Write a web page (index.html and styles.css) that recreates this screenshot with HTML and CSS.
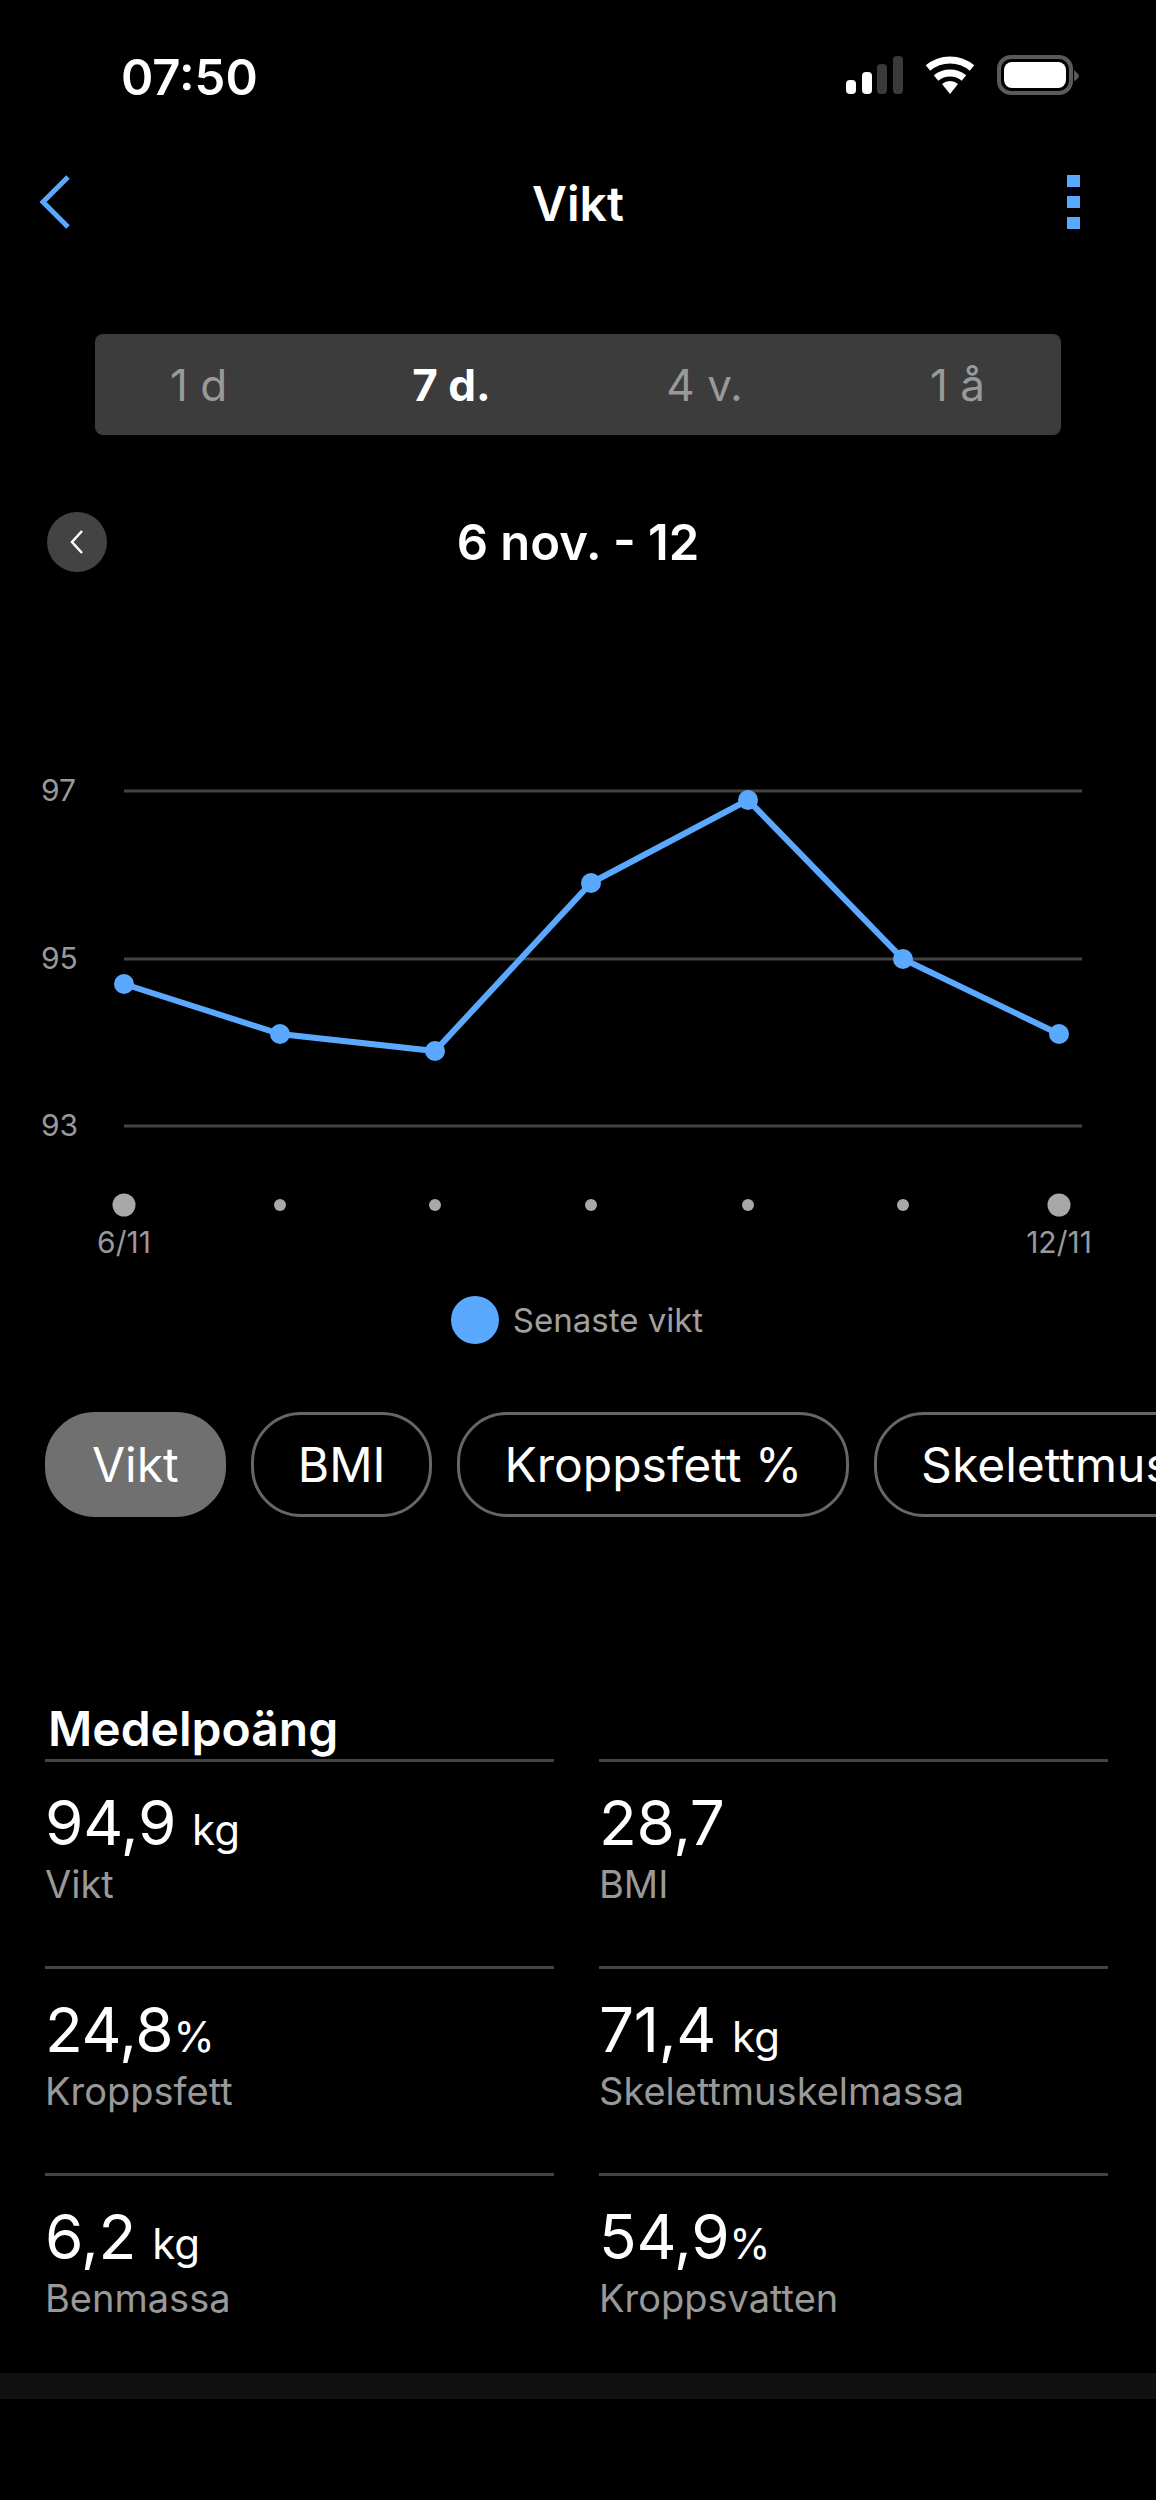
FILE: index.html
```html
<!DOCTYPE html>
<html lang="sv">
<head>
  <meta charset="UTF-8">
  <title>Vikt</title>
  <meta name="viewport" content="width=device-width, initial-scale=1.0">
  <link rel="stylesheet" href="styles.css">
</head>
<body>

  <div class="status-bar">
    <div class="time">07:50</div>
    <svg class="status-icons" width="240" height="44" viewBox="0 0 240 44">
      <rect x="0" y="25" width="10" height="14" rx="4" fill="#fff"/>
      <rect x="16" y="17" width="10" height="22" rx="4" fill="#fff"/>
      <rect x="31" y="9" width="10" height="30" rx="4" fill="#3a3a3a"/>
      <rect x="47" y="1" width="10" height="38" rx="4" fill="#3a3a3a"/>
      <path d="M82 13 A 34 34 0 0 1 126 13" fill="none" stroke="#fff" stroke-width="7"/>
      <path d="M90 23 A 22 22 0 0 1 118 23" fill="none" stroke="#fff" stroke-width="7"/>
      <path d="M96 29 A 12 12 0 0 1 112 29 L104 39 Z" fill="#fff"/>
      <rect x="153" y="2" width="72" height="36" rx="12" fill="none" stroke="#5a5a5a" stroke-width="4"/>
      <rect x="158" y="7" width="62" height="26" rx="8" fill="#fff"/>
      <path d="M228 15 Q233 20 233 20 Q233 24 228 26 Z" fill="#5a5a5a"/>
    </svg>
  </div>

  <div class="nav">
    <svg class="back" width="34" height="56" viewBox="0 0 34 56">
      <path d="M30 3 L5 28 L30 53" fill="none" stroke="#5aa9ff" stroke-width="5"/>
    </svg>
    <div class="nav-title">Vikt</div>
    <div class="more"><span></span><span></span><span></span></div>
  </div>

  <div class="segments">
    <div class="segment">1 d</div>
    <div class="segment active">7 d.</div>
    <div class="segment">4 v.</div>
    <div class="segment">1 å</div>
  </div>

  <div class="date-row">
    <div class="date-prev">
      <svg width="16" height="26" viewBox="0 0 16 26">
        <path d="M13 2 L3 13 L13 24" fill="none" stroke="#fff" stroke-width="2.5"/>
      </svg>
    </div>
    <div class="date-label">6 nov. - 12</div>
  </div>

  <svg class="chart" width="1156" height="600" viewBox="0 760 1156 600">
    <g class="grid">
      <line x1="124" y1="791" x2="1082" y2="791"/>
      <line x1="124" y1="959" x2="1082" y2="959"/>
      <line x1="124" y1="1126" x2="1082" y2="1126"/>
    </g>
    <g class="axis-label">
      <text x="41" y="801">97</text>
      <text x="41" y="969">95</text>
      <text x="41" y="1136">93</text>
      <text x="124" y="1253" text-anchor="middle">6/11</text>
      <text x="1059" y="1253" text-anchor="middle">12/11</text>
    </g>
    <g class="ticks">
      <circle cx="124" cy="1205" r="11.5"/>
      <circle cx="280" cy="1205" r="6"/>
      <circle cx="435" cy="1205" r="6"/>
      <circle cx="591" cy="1205" r="6"/>
      <circle cx="748" cy="1205" r="6"/>
      <circle cx="903" cy="1205" r="6"/>
      <circle cx="1059" cy="1205" r="11.5"/>
    </g>
    <polyline class="line" points="124,984 280,1034 435,1051 591,883 748,800 903,959 1059,1034"/>
    <g class="points">
      <circle cx="124" cy="984" r="10"/>
      <circle cx="280" cy="1034" r="10"/>
      <circle cx="435" cy="1051" r="10"/>
      <circle cx="591" cy="883" r="10"/>
      <circle cx="748" cy="800" r="10"/>
      <circle cx="903" cy="959" r="10"/>
      <circle cx="1059" cy="1034" r="10"/>
    </g>
  </svg>

  <div class="legend">
    <span class="legend-dot"></span>
    <span class="legend-text">Senaste vikt</span>
  </div>

  <div class="pills">
    <div class="pill active">Vikt</div>
    <div class="pill">BMI</div>
    <div class="pill">Kroppsfett %</div>
    <div class="pill">Skelettmuskelmassa</div>
  </div>

  <div class="section-title">Medelpoäng</div>

  <div class="stats">
    <div class="stat">
      <div class="value">94,9<span class="unit">kg</span></div>
      <div class="label">Vikt</div>
    </div>
    <div class="stat">
      <div class="value">28,7</div>
      <div class="label">BMI</div>
    </div>
    <div class="stat">
      <div class="value">24,8<span class="percent">%</span></div>
      <div class="label">Kroppsfett</div>
    </div>
    <div class="stat">
      <div class="value">71,4<span class="unit">kg</span></div>
      <div class="label">Skelettmuskelmassa</div>
    </div>
    <div class="stat">
      <div class="value">6,2<span class="unit">kg</span></div>
      <div class="label">Benmassa</div>
    </div>
    <div class="stat">
      <div class="value">54,9<span class="percent">%</span></div>
      <div class="label">Kroppsvatten</div>
    </div>
  </div>

  <div class="band"></div>

</body>
</html>
```

FILE: styles.css
```css
html, body {
  margin: 0;
  padding: 0;
  background: #000;
}

body {
  width: 1156px;
  height: 2500px;
  overflow: hidden;
  color: #fff;
  font-family: Inter, Roboto, "Liberation Sans", sans-serif;
}

.status-bar {
  height: 154px;
  display: flex;
  justify-content: space-between;
  align-items: center;
  padding-left: 121px;
}

.time {
  font-size: 49px;
  font-weight: 600;
}

.status-icons {
  margin-right: 70px;
}

.nav {
  height: 96px;
  display: flex;
  align-items: center;
  justify-content: space-between;
  padding: 0 76px 0 38px;
}

.nav-title {
  font-size: 48px;
  font-weight: 600;
  margin: 3px 0 0 17px;
}

.more span {
  display: block;
  width: 13px;
  height: 12px;
  margin: 9px 0;
  background: #5aa9ff;
}

.segments {
  display: flex;
  justify-content: center;
  margin: 84px 95px 0;
  height: 101px;
  background: #3c3c3c;
  border-radius: 8px;
}

.segment {
  flex: none;
  width: 253px;
  text-align: center;
  line-height: 103px;
  font-size: 44px;
  color: #999;
}

.segment.active {
  color: #fff;
  font-weight: 700;
}

.date-row {
  position: relative;
  margin-top: 77px;
  height: 60px;
  text-align: center;
}

.date-prev {
  position: absolute;
  left: 47px;
  top: 0;
  width: 60px;
  height: 60px;
  border-radius: 50%;
  background: #434343;
  display: flex;
  align-items: center;
  justify-content: center;
}

.date-label {
  font-size: 49px;
  font-weight: 600;
  line-height: 62px;
}

.chart {
  display: block;
  margin-top: 188px;
}

.grid line {
  stroke: #444;
  stroke-width: 3;
}

.axis-label text {
  font-size: 30px;
  fill: #999;
}

.ticks circle {
  fill: #a8a8a8;
}

.line {
  fill: none;
  stroke: #5aa9ff;
  stroke-width: 6;
}

.points circle {
  fill: #5aa9ff;
}

.legend {
  position: relative;
  top: -40px;
  height: 0;
  display: flex;
  align-items: center;
  justify-content: center;
  gap: 14px;
  padding-right: 2px;
}

.legend-dot {
  width: 48px;
  height: 48px;
  border-radius: 50%;
  background: #5aa9ff;
  flex: none;
}

.legend-text {
  font-size: 33px;
  color: #a0a0a0;
}

.pills {
  display: flex;
  gap: 25px;
  margin-top: 52px;
  padding-left: 45px;
  white-space: nowrap;
}

.pill {
  flex: none;
  box-sizing: border-box;
  height: 105px;
  line-height: 99px;
  padding: 0 44px;
  border: 3px solid #666;
  border-radius: 50px;
  font-size: 48px;
}

.pill.active {
  background: #707070;
  border-color: #707070;
}

.section-title {
  margin: 178px 0 0 48px;
  height: 64px;
  line-height: 68px;
  font-size: 48px;
  font-weight: 600;
}

.stats {
  display: grid;
  grid-template-columns: 509px 509px;
  column-gap: 45px;
  row-gap: 9px;
  grid-auto-rows: 198px;
  margin-left: 45px;
}

.stat {
  border-top: 3px solid #444;
}

.value {
  margin-top: 25px;
  height: 72px;
  line-height: 72px;
  font-size: 62px;
  letter-spacing: -0.3px;
}

.unit {
  font-size: 42px;
  margin-left: 16px;
  letter-spacing: 0;
}

.percent {
  font-size: 42px;
  letter-spacing: 0;
}

.label {
  font-size: 38px;
  line-height: 46px;
  margin-top: 2px;
  color: #999;
}

.band {
  height: 26px;
  margin-top: 2px;
  background: #111;
}
```
